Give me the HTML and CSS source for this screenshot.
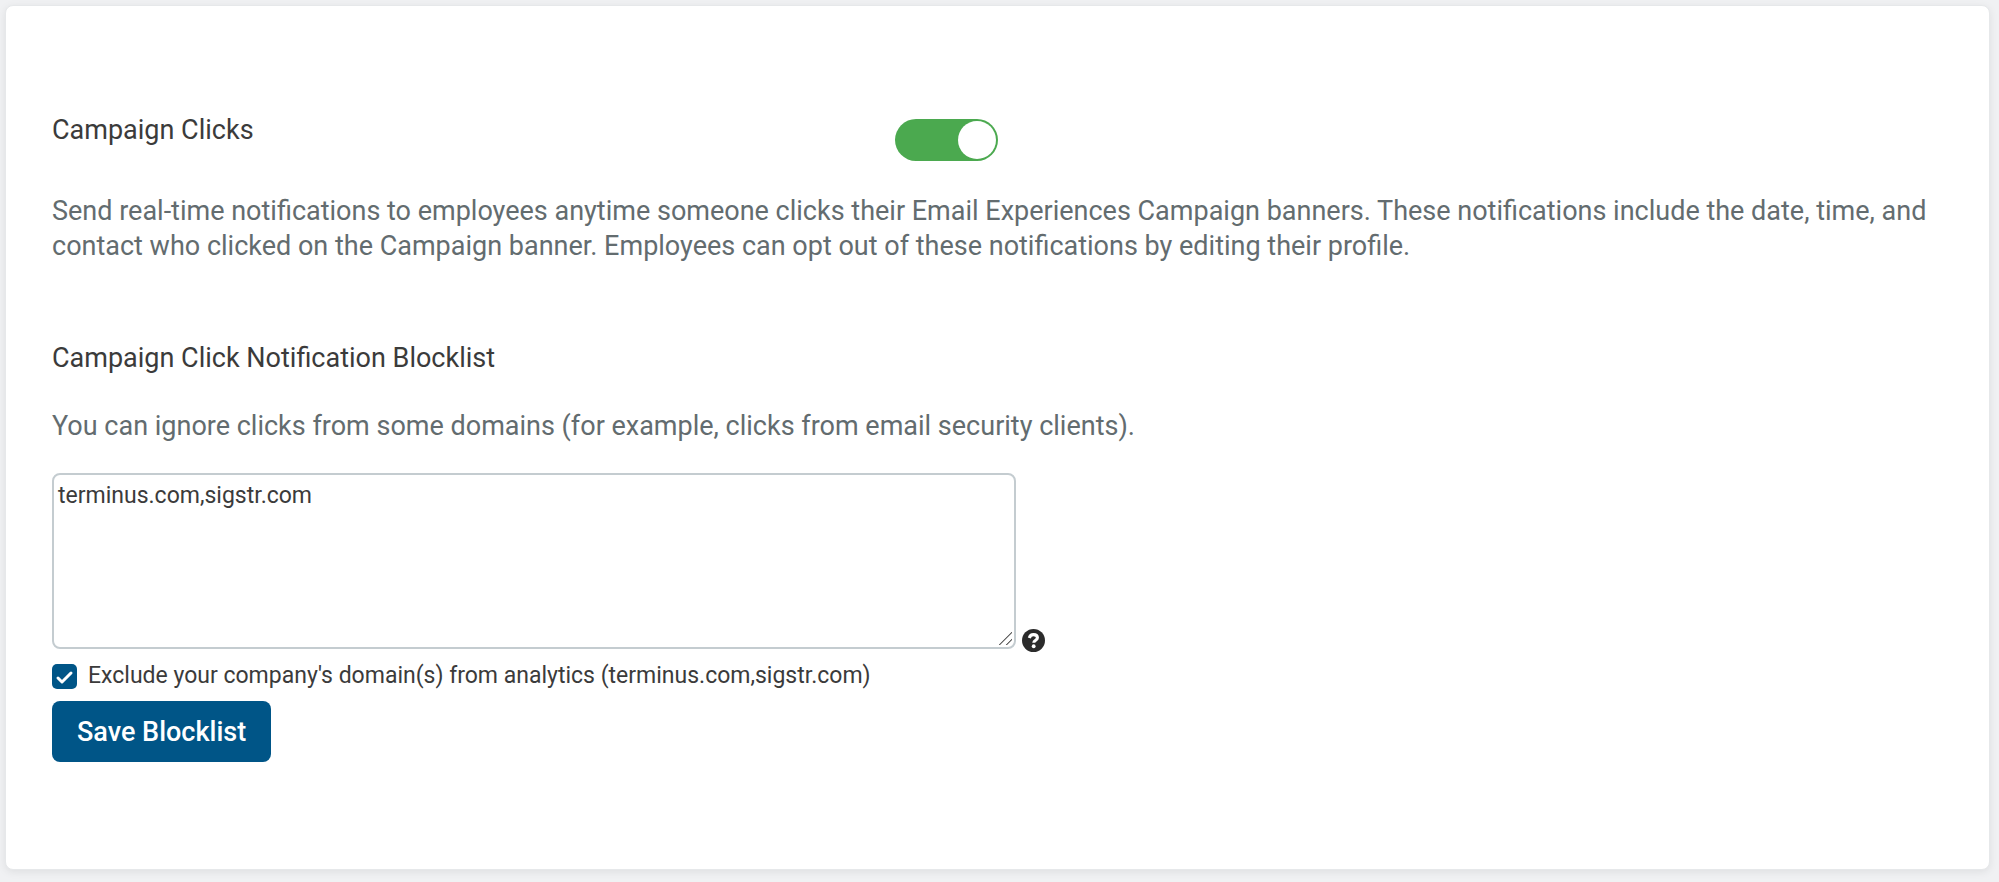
FILE: index.html
```html
<!DOCTYPE html>
<html lang="en">

<head>
    <meta charset="utf-8">
    <meta name="viewport" content="width=device-width, initial-scale=1">
    <title>Campaign Clicks</title>
    <link rel="stylesheet" href="styles.css">
</head>

<body>
    <div class="card">
        <div class="setting-row">
            <label class="title" for="campaign-clicks">Campaign Clicks</label>
            <input type="checkbox" class="switch" id="campaign-clicks" checked>
        </div>
        <p class="description">Send real-time notifications to employees anytime someone clicks their Email Experiences Campaign banners. These notifications include the date, time, and contact who clicked on the Campaign banner. Employees can opt out of these notifications by editing their profile.</p>

        <form class="blocklist">
            <label class="title" for="domains">Campaign Click Notification Blocklist</label>
            <p class="description">You can ignore clicks from some domains (for example, clicks from email security clients).</p>
            <div class="domains-row">
                <textarea id="domains" spellcheck="false">terminus.com,sigstr.com</textarea>
                <svg class="help" viewBox="0 0 24 24" role="img" aria-label="Help">
                    <circle cx="12" cy="12" r="12" fill="#2b2b2b"/>
                    <path d="M7.600 9.400C8.300 7 9.800 5.900 12 5.900c2.300 0 4.100 1.200 4.100 3.300 0 2.600-3.800 2.500-3.800 5.200" fill="none" stroke="#fff" stroke-width="3.200"/>
                    <circle cx="12.200" cy="18" r="2" fill="#fff"/>
                </svg>
            </div>
            <div class="exclude-row">
                <input type="checkbox" class="check" id="exclude" checked>
                <label for="exclude">Exclude your company's domain(s) from analytics (terminus.com,sigstr.com)</label>
            </div>
            <button type="button" class="save">Save Blocklist</button>
        </form>
    </div>
</body>

</html>
```

FILE: styles.css
```css
* {
    box-sizing: border-box;
}

body {
    background-color: #f0f1f3;
    color: #3b3b3b;
    font-family: Roboto, sans-serif;
    font-size: 27px;
    margin: 0;
    padding: 5px 9px 11px 5px;
}

.card {
    background-color: #ffffff;
    border: 1px solid #e6e8ea;
    border-radius: 8px;
    box-shadow: 0 2px 8px rgba(0, 0, 0, 0.08);
    padding: 106px 46px 107px;
}

.setting-row {
    display: grid;
    grid-template-columns: 843px 1fr;
    align-items: start;
}

.title {
    display: block;
    line-height: 36px;
}

.description {
    color: #636c6f;
    line-height: 35px;
    margin: 33px 0 0;
}

.switch {
    appearance: none;
    width: 103px;
    height: 42px;
    margin: 7px 0 0;
    border-radius: 21px;
    background-color: #4ba94f;
    padding: 2px;
    cursor: pointer;
}

.switch::before {
    content: "";
    display: block;
    width: 38px;
    height: 38px;
    border-radius: 50%;
    background-color: #ffffff;
}

.switch:checked::before {
    margin-left: auto;
}

.blocklist {
    margin-top: 76px;
}

.domains-row {
    display: flex;
    align-items: flex-end;
    gap: 6px;
    margin-top: 29px;
}

.domains-row textarea {
    width: 964px;
    height: 176px;
    margin: 0 0 3px;
    padding: 6px 4px;
    border: 2px solid #c4ccd0;
    border-radius: 8px;
    color: #3b3b3b;
    font-family: inherit;
    font-size: 23px;
    line-height: 30px;
}

.domains-row textarea::-webkit-resizer {
    background: linear-gradient(135deg, transparent 46%, #666666 48%, #666666 53%, transparent 55%, transparent 73%, #666666 75%, #666666 80%, transparent 82%) no-repeat 0 0 / 13px 13px;
}

.help {
    width: 23px;
    height: 23px;
}

.exclude-row {
    display: flex;
    align-items: center;
    gap: 11px;
    font-size: 23px;
    line-height: 28px;
    margin-top: 10px;
}

.check {
    appearance: none;
    width: 25px;
    height: 25px;
    margin: 0;
    border-radius: 5px;
    background-color: #005587;
}

.check:checked {
    background-image: url("data:image/svg+xml,%3Csvg xmlns='http://www.w3.org/2000/svg' viewBox='0 0 25 25'%3E%3Cpath d='M6 14l4 4 9-9' fill='none' stroke='white' stroke-width='3' stroke-linecap='round' stroke-linejoin='round'/%3E%3C/svg%3E");
}

.save {
    height: 61px;
    margin-top: 11px;
    padding: 0 25px;
    border: none;
    border-radius: 8px;
    background-color: #005587;
    color: #ffffff;
    font-family: inherit;
    font-size: 27px;
    font-weight: 500;
    cursor: pointer;
}
```
